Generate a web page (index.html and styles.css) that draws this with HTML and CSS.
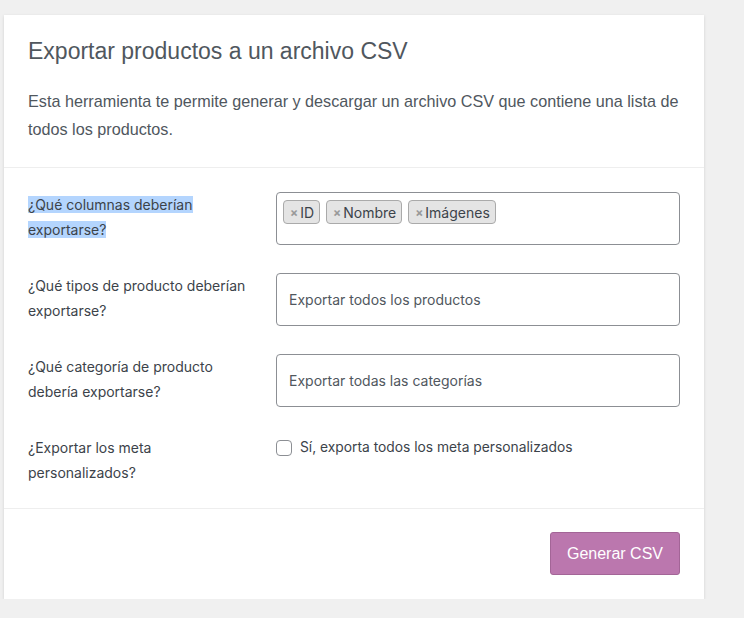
FILE: index.html
```html
<!DOCTYPE html>
<html lang="es">
<head>
<meta charset="UTF-8">
<meta name="viewport" content="width=device-width, initial-scale=1.0">
<title>Exportar productos</title>
<link rel="stylesheet" href="styles.css">
</head>
<body>
    <div class="card">
        <div class="card-header">
            <h2>Exportar productos a un archivo CSV</h2>
            <p>Esta herramienta te permite generar y descargar un archivo CSV que contiene una lista de todos los productos.</p>
        </div>
        <div class="card-body">
            <div class="row">
                <label class="label"><span class="selected">¿Qué columnas deberían exportarse?</span></label>
                <div class="field tags">
                    <span class="tag"><span class="x">×</span>ID</span>
                    <span class="tag"><span class="x">×</span>Nombre</span>
                    <span class="tag"><span class="x">×</span>Imágenes</span>
                </div>
            </div>
            <div class="row">
                <label class="label">¿Qué tipos de producto deberían exportarse?</label>
                <div class="field select">Exportar todos los productos</div>
            </div>
            <div class="row">
                <label class="label">¿Qué categoría de producto debería exportarse?</label>
                <div class="field select">Exportar todas las categorías</div>
            </div>
            <div class="row">
                <label class="label">¿Exportar los meta personalizados?</label>
                <label class="check"><span class="box"></span>Sí, exporta todos los meta personalizados</label>
            </div>
        </div>
        <div class="card-footer">
            <button>Generar CSV</button>
        </div>
    </div>
</body>
</html>
```

FILE: styles.css
```css
body {
    font-family: Inter, "Noto Sans", sans-serif;
    margin: 0;
    background: #f0f0f0;
    color: #3c434a;
}
.card {
    width: 700px;
    margin: 15px 0 0 4px;
    background: #fff;
    box-shadow: 0 1px 3px rgba(0,0,0,0.13);
}
.card-header {
    padding: 25px 24px 24px;
    border-bottom: 1px solid #eee;
}
.card-header h2 {
    margin: 0;
    font-family: "Liberation Sans", Arial, sans-serif;
    font-weight: 400;
    font-size: 23px;
    line-height: 22px;
    color: #50575e;
}
.card-header p {
    margin: 25px 0 0;
    font-family: "Liberation Sans", Arial, sans-serif;
    font-size: 16.2px;
    line-height: 28px;
    color: #50575e;
}
.card-body {
    padding: 24px 24px 23px;
    display: flex;
    flex-direction: column;
    gap: 28px;
    border-bottom: 1px solid #eee;
}
.row {
    display: flex;
}
.label {
    width: 248px;
    flex: none;
    font-size: 14px;
    line-height: 25px;
    padding-right: 18px;
    box-sizing: border-box;
}
.selected {
    background: #b4d5fe;
}
.field {
    flex: 1;
    border: 1px solid #8c8f94;
    border-radius: 4px;
    box-sizing: border-box;
    height: 53px;
}
.select {
    display: flex;
    align-items: center;
    padding-left: 12px;
    font-size: 14px;
    color: #50575e;
}
.tags {
    display: flex;
    align-items: flex-start;
    gap: 6px;
    padding: 7px 6px;
}
.tag {
    display: flex;
    align-items: center;
    height: 24px;
    box-sizing: border-box;
    padding: 0 5px 0 6px;
    background: #e4e4e4;
    border: 1px solid #aaa;
    border-radius: 4px;
    font-size: 14px;
    color: #3c434a;
}
.tag .x {
    color: #999;
    font-size: 12px;
    font-weight: 700;
    margin-right: 2px;
}
.check {
    display: flex;
    align-items: flex-start;
    font-size: 13.8px;
    line-height: 25px;
}
.box {
    width: 16px;
    height: 16px;
    box-sizing: border-box;
    border: 1px solid #8c8f94;
    border-radius: 4px;
    margin: 5px 8px 0 0;
}
.card-footer {
    padding: 23px 24px 24px;
    display: flex;
    justify-content: flex-end;
}
button {
    width: 130px;
    height: 43px;
    background: #bb77ae;
    border: 1px solid #a36597;
    border-radius: 3px;
    color: #fff;
    font-family: "Liberation Sans", Arial, sans-serif;
    font-size: 16px;
    cursor: pointer;
}
```
